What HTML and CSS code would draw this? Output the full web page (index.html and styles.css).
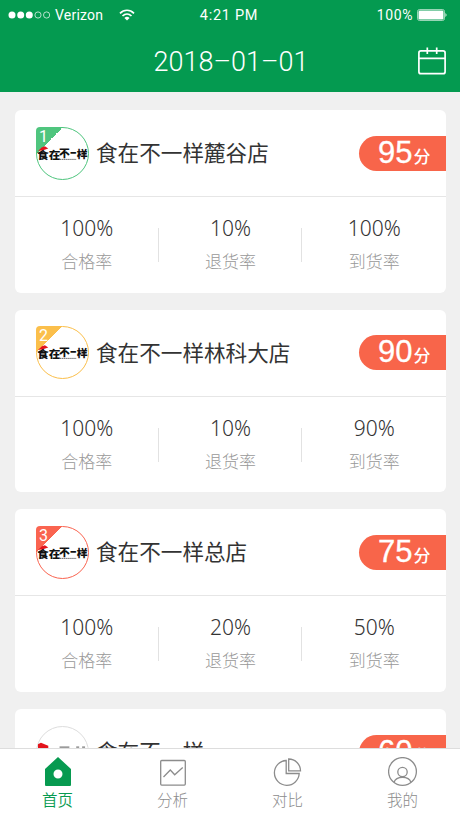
FILE: index.html
```html
<!DOCTYPE html>
<html lang="zh-CN">
<head>
    <meta charset="UTF-8">
    <meta name="viewport" content="width=device-width, initial-scale=1.0">
    <title>首页</title>
    <link rel="stylesheet" href="styles.css">
</head>
<body>
    <div class="header">
        <div class="status">
            <div class="carrier">
                <svg width="42" height="8" viewBox="0 0 42 8" fill="#fff">
                    <circle cx="4" cy="4" r="3.500"/>
                    <circle cx="12.700" cy="4" r="3.500"/>
                    <circle cx="21.300" cy="4" r="3.500"/>
                    <g fill="none" stroke="#fff" stroke-width=".7">
                        <circle cx="30" cy="4" r="3.100"/>
                        <circle cx="38.600" cy="4" r="3.100"/>
                    </g>
                </svg>
                <span class="carrier-name">Verizon</span>
                <svg width="16" height="12" viewBox="0 0 16 12" fill="none" stroke="#fff" stroke-width="1.700">
                    <path d="M1 4.300 C5 .2 11 .2 15 4.300"/>
                    <path d="M3.500 7 C6.200 4.300 9.800 4.300 12.500 7"/>
                    <path d="M5.400 8.900 C7 7.500 9 7.500 10.600 8.900 L8 11.600 Z" fill="#fff" stroke="none"/>
                </svg>
            </div>
            <div class="time">4:21 PM</div>
            <div class="power">
                <span>100%</span>
                <svg width="31" height="12" viewBox="0 0 31 12">
                    <rect x=".5" y=".5" width="27" height="11" rx="2" fill="none" stroke="#bfe5d0" stroke-width=".8"/>
                    <rect x="1.500" y="1.500" width="25" height="9" rx="1.200" fill="#fff"/>
                    <path d="M28.500 4 Q30.500 6 28.500 8 Z" fill="#fff"/>
                </svg>
            </div>
        </div>
        <div class="title-bar">
            <h1>2018–01–01</h1>
            <svg class="calendar" width="30" height="28" viewBox="0 0 30 28" fill="none" stroke="#fff" stroke-width="1.700">
                <rect x="1.900" y="3.900" width="26.200" height="22.800" rx="2"/>
                <path d="M2 11.300 H28 M10.300 .5 V7 M19.700 .5 V7"/>
            </svg>
        </div>
    </div>

    <div class="list">
        <div class="card">
            <div class="shop">
                <div class="avatar first">
                    <span class="rank">1</span>
                    <svg class="logo" viewBox="0 0 52 52">
                        <text transform="translate(0 31.500) scale(1.080 1)">食在</text>
                        <text transform="translate(22.500 29.800) scale(1 .9)">不</text>
                        <text transform="translate(34 30) scale(.55 1)">一</text>
                        <text transform="translate(40.500 31)">样</text>
                        <path d="M1 23.500 L5 19.500 L8 18.500 L11.500 21 L7 22.500 Z" fill="#e3141c"/>
                        <path d="M23 32 H40" stroke="#666" stroke-width="1" stroke-dasharray="1.500 .5"/>
                    </svg>
                </div>
                <h2>食在不一样麓谷店</h2>
                <div class="score"><b>95</b>分</div>
            </div>
            <div class="stats">
                <div class="stat"><p>100%</p><span>合格率</span></div>
                <div class="stat"><p>10%</p><span>退货率</span></div>
                <div class="stat"><p>100%</p><span>到货率</span></div>
            </div>
        </div>

        <div class="card">
            <div class="shop">
                <div class="avatar second">
                    <span class="rank">2</span>
                    <svg class="logo" viewBox="0 0 52 52">
                        <text transform="translate(0 31.500) scale(1.080 1)">食在</text>
                        <text transform="translate(22.500 29.800) scale(1 .9)">不</text>
                        <text transform="translate(34 30) scale(.55 1)">一</text>
                        <text transform="translate(40.500 31)">样</text>
                        <path d="M1 23.500 L5 19.500 L8 18.500 L11.500 21 L7 22.500 Z" fill="#e3141c"/>
                        <path d="M23 32 H40" stroke="#666" stroke-width="1" stroke-dasharray="1.500 .5"/>
                    </svg>
                </div>
                <h2>食在不一样林科大店</h2>
                <div class="score"><b>90</b>分</div>
            </div>
            <div class="stats">
                <div class="stat"><p>100%</p><span>合格率</span></div>
                <div class="stat"><p>10%</p><span>退货率</span></div>
                <div class="stat"><p>90%</p><span>到货率</span></div>
            </div>
        </div>

        <div class="card">
            <div class="shop">
                <div class="avatar third">
                    <span class="rank">3</span>
                    <svg class="logo" viewBox="0 0 52 52">
                        <text transform="translate(0 31.500) scale(1.080 1)">食在</text>
                        <text transform="translate(22.500 29.800) scale(1 .9)">不</text>
                        <text transform="translate(34 30) scale(.55 1)">一</text>
                        <text transform="translate(40.500 31)">样</text>
                        <path d="M1 23.500 L5 19.500 L8 18.500 L11.500 21 L7 22.500 Z" fill="#e3141c"/>
                        <path d="M23 32 H40" stroke="#666" stroke-width="1" stroke-dasharray="1.500 .5"/>
                    </svg>
                </div>
                <h2>食在不一样总店</h2>
                <div class="score"><b>75</b>分</div>
            </div>
            <div class="stats">
                <div class="stat"><p>100%</p><span>合格率</span></div>
                <div class="stat"><p>20%</p><span>退货率</span></div>
                <div class="stat"><p>50%</p><span>到货率</span></div>
            </div>
        </div>

        <div class="card">
            <div class="shop">
                <div class="avatar">
                    <!-- only the top edge shows above the tab bar -->
                    <svg class="logo" viewBox="0 0 52 52">
                        <path d="M1 24 V17.500 L4 16 L11.500 19 V24 Z" fill="#e3141c"/>
                        <path d="M23 20.500 H33 M40 20.500 H43 M46 20.500 H49" stroke="#555"/>
                    </svg>
                </div>
                <h2>食在不一样</h2>
                <div class="score"><b>60</b>分</div>
            </div>
        </div>
    </div>

    <div class="tabs">
        <div class="tab active">
            <svg width="30" height="30" viewBox="0 0 30 30">
                <path fill-rule="evenodd" fill="#079a50" d="M15 0 L28 12 V28 Q28 29 27 29 H3 Q2 29 2 28 V12 Z M15 12.500 A4.500 4.500 0 1 0 15 21.500 A4.500 4.500 0 1 0 15 12.500 Z"/>
            </svg>
            <span>首页</span>
        </div>
        <div class="tab">
            <svg width="30" height="30" viewBox="0 0 30 30" fill="none" stroke="#8c8c8c" stroke-width="1.300">
                <rect x="2.700" y="3.500" width="24.600" height="24.600" rx="1"/>
                <path d="M5.500 20 L12.300 13 L16.700 17.800 L24.700 10.500"/>
            </svg>
            <span>分析</span>
        </div>
        <div class="tab">
            <svg width="30" height="30" viewBox="0 0 30 30" fill="none" stroke="#8c8c8c" stroke-width="1.300">
                <path d="M13.200 3.500 A12.400 12.400 0 1 0 26.200 16.500 H13.200 Z"/>
                <path d="M15.700 2 A11.800 11.800 0 0 1 27.500 13.800 H15.700 Z"/>
            </svg>
            <span>对比</span>
        </div>
        <div class="tab">
            <svg width="30" height="30" viewBox="0 0 30 30" fill="none" stroke="#8c8c8c" stroke-width="1.300">
                <circle cx="14.500" cy="14.500" r="13.900"/>
                <circle cx="14.500" cy="15" r="4.700"/>
                <path d="M6 25.500 C8.200 18.800 20.800 18.800 23 25.500"/>
            </svg>
            <span>我的</span>
        </div>
    </div>
</body>
</html>
```
FILE: styles.css
```css
* {
    box-sizing: border-box;
    margin: 0;
    padding: 0;
}

body {
    font-family: "Liberation Sans", "Noto Sans CJK SC", sans-serif;
    display: flex;
    flex-direction: column;
    height: 100vh;
    overflow: hidden;
    background-color: #f0f0f0;
    color: #333;
}

svg {
    display: block;
}

.header {
    flex: none;
    height: 92px;
    background-color: #049a50;
    color: #fff;
}

.status {
    display: grid;
    grid-template-columns: 1fr auto 1fr;
    align-items: center;
    height: 30px;
    padding: 0 12px 0 8px;
    font-family: Roboto, sans-serif;
    font-size: 14px;
}

.carrier,
.power {
    display: flex;
    align-items: center;
}

.carrier-name {
    margin: 0 16px 0 5px;
    letter-spacing: 0.2px;
}

.time {
    padding-left: 2px;
    font-size: 14.5px;
    letter-spacing: 0.7px;
}

.power {
    justify-content: flex-end;
    gap: 4px;
    letter-spacing: 0.6px;
}

.title-bar {
    display: grid;
    grid-template-columns: 1fr auto 1fr;
    align-items: center;
    height: 62px;
    padding: 0 13px 0 15px;
}

.title-bar h1 {
    grid-column: 2;
    padding-top: 2px;
    font-family: Roboto, sans-serif;
    font-size: 27px;
    font-weight: 350;
}

.calendar {
    justify-self: end;
}

.list {
    flex: 1;
    min-height: 0;
    overflow: hidden;
    display: flex;
    flex-direction: column;
    gap: 17px;
    padding: 18px 14px 0 15px;
}

.card {
    flex: none;
    height: 182.7px;
    background-color: #fff;
    border-radius: 6px;
}

.shop {
    display: flex;
    align-items: center;
    height: 87px;
    padding-left: 21px;
    border-bottom: 1px solid #e6e6e6;
}

.avatar {
    position: relative;
    width: 53px;
    height: 53px;
    border: 1px solid #ddd;
    border-radius: 50%;
}

.logo {
    position: relative;
    width: 51px;
    height: 51px;
    overflow: visible;
    font-family: "Noto Sans CJK SC", sans-serif;
    font-size: 11px;
    font-weight: 900;
    fill: #111;
}

.first {
    --rank: #4fc57e;
    border-color: var(--rank);
}

.second {
    --rank: #fbbf4b;
    border-color: var(--rank);
}

.third {
    --rank: #fa6450;
    border-color: var(--rank);
}

.rank {
    position: absolute;
    top: -1px;
    left: -1px;
    width: 27px;
    height: 27px;
    padding-left: 3px;
    border-top-left-radius: 4px;
    background: linear-gradient(135deg, var(--rank) 50%, transparent 50%);
    color: #fff;
    font-family: Roboto, sans-serif;
    font-size: 16px;
    line-height: 19px;
}

.shop h2 {
    margin-left: 7px;
    padding-bottom: 3px;
    font-family: "Noto Sans CJK SC", sans-serif;
    font-size: 21.6px;
    font-weight: 400;
}

.score {
    display: flex;
    align-items: baseline;
    width: 87px;
    height: 35px;
    margin-left: auto;
    padding-left: 19px;
    border-radius: 18px 0 0 18px;
    background-color: #f8654a;
    color: #fff;
    font-size: 17px;
    font-weight: 500;
    line-height: 33px;
}

.score b {
    margin-right: 1px;
    font-size: 31px;
    font-weight: 400;
    -webkit-text-stroke: 0.3px #fff;
}

.stats {
    display: flex;
    padding-top: 15px;
}

.stat {
    position: relative;
    flex: 1;
    text-align: center;
    font-family: "Noto Sans CJK SC", sans-serif;
}

.stat + .stat::before {
    content: "";
    position: absolute;
    top: 16px;
    left: -1px;
    width: 1px;
    height: 34px;
    background-color: #e2e2e2;
}

.stat p {
    font-family: "Noto Sans", sans-serif;
    font-size: 21px;
    font-weight: 350;
    line-height: 32px;
}

.stat span {
    display: block;
    color: #999;
    font-size: 17px;
    font-weight: 300;
    line-height: 33px;
}

.tabs {
    flex: none;
    display: flex;
    height: 70px;
    padding-top: 8px;
    border-top: 1px solid #ddd;
    background-color: #fff;
}

.tab {
    flex: 1;
    display: flex;
    flex-direction: column;
    align-items: center;
    color: #8c8c8c;
    font-family: "Noto Sans CJK SC", sans-serif;
    font-size: 15.5px;
    font-weight: 300;
    line-height: 24px;
}

.active {
    color: #079a50;
    font-weight: 350;
}
```
